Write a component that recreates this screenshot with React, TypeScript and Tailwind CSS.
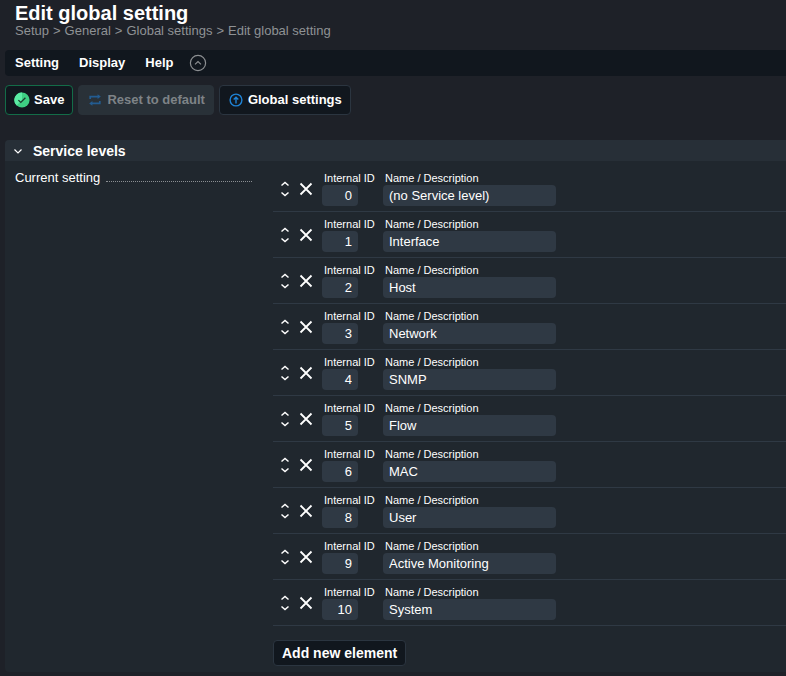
import React, { useState } from 'react';

interface ServiceLevel {
  id: number;
  name: string;
}

const initialLevels: ServiceLevel[] = [
  { id: 0, name: '(no Service level)' },
  { id: 1, name: 'Interface' },
  { id: 2, name: 'Host' },
  { id: 3, name: 'Network' },
  { id: 4, name: 'SNMP' },
  { id: 5, name: 'Flow' },
  { id: 6, name: 'MAC' },
  { id: 8, name: 'User' },
  { id: 9, name: 'Active Monitoring' },
  { id: 10, name: 'System' },
];

const breadcrumb = ['Setup', 'General', 'Global settings'];

const SaveIcon = () => (
  <svg width="16" height="16" viewBox="0 0 16 16" aria-hidden="true">
    <circle cx="8" cy="8" r="7.6" fill="#3ecf83" />
    <path d="M8 .4a7.6 7.6 0 0 0-5.4 13L8 8z" fill="#5aeba3" />
    <path d="M4.4 8.1l2.4 2.3 4.6-4.6" fill="none" stroke="#1c3a2e" strokeWidth="1.3" />
  </svg>
);

const ResetIcon = () => (
  <svg width="16" height="16" viewBox="0 0 16 16" fill="none" stroke="#235c91" strokeWidth="1.7" aria-hidden="true">
    <path d="M3.2 7V4.6h8M12.8 9v2.4h-8" />
    <path d="M10.6 2.2l3.2 2.4-3.2 2.4zM5.4 9l-3.2 2.4 3.2 2.4z" fill="#235c91" stroke="none" />
  </svg>
);

const GlobalIcon = () => (
  <svg width="16" height="16" viewBox="0 0 16 16" fill="none" stroke="#1f83d6" strokeWidth="1.4" aria-hidden="true">
    <circle cx="8" cy="8" r="5.9" />
    <path d="M8 11.4V5.4M5.7 7.5L8 5.2l2.3 2.3" />
  </svg>
);

const DragIcon = () => (
  <svg width="10" height="16" viewBox="0 0 10 16" fill="none" stroke="#fff" strokeWidth="1.5" aria-hidden="true">
    <path d="M1.5 4.5L5 1.5l3.5 3M1.5 11.5l3.5 3 3.5-3" />
  </svg>
);

const CloseIcon = () => (
  <svg width="14" height="14" viewBox="0 0 14 14" fill="none" stroke="#fff" strokeWidth="1.8" aria-hidden="true">
    <path d="M1.5 1.5l11 11M12.5 1.5l-11 11" />
  </svg>
);

const App: React.FC = () => {
  const [levels, setLevels] = useState<ServiceLevel[]>(initialLevels);
  const [open, setOpen] = useState(true);

  const updateLevel = (index: number, patch: Partial<ServiceLevel>) => {
    setLevels(levels.map((level, i) => (i === index ? { ...level, ...patch } : level)));
  };

  const addLevel = () => setLevels([...levels, { id: levels.length + 1, name: '' }]);

  return (
    <div className="min-h-screen bg-[#1e2128] pl-[5px] pb-1 text-[13px] leading-4 text-white font-['Liberation_Sans',Arial,sans-serif]">
      <header className="h-[50px] pl-[10px] pt-[2px]">
        <h1 className="text-[20px] leading-[22px] font-bold">Edit global setting</h1>
        <nav aria-label="Breadcrumb" className="flex gap-1 leading-[14px] text-[#8f9295]">
          {breadcrumb.map(item => (
            <React.Fragment key={item}>
              <a href="#">{item}</a>
              <span>&gt;</span>
            </React.Fragment>
          ))}
          <a href="#">Edit global setting</a>
        </nav>
      </header>

      {/* Menu bar */}
      <nav aria-label="Page menu" className="flex h-[26px] items-center gap-5 rounded-l bg-[#11171e] pl-[10px] font-bold">
        <button>Setting</button>
        <button>Display</button>
        <button>Help</button>
        <button aria-label="Hide suggestions" className="-ml-1">
          <svg width="18" height="18" viewBox="0 0 18 18" fill="none" stroke="#8c8f92" strokeWidth="1.2">
            <circle cx="9" cy="9" r="7.6" />
            <path d="M6 10.4l3-2.9 3 2.9" />
          </svg>
        </button>
      </nav>

      {/* Suggested actions */}
      <div className="flex gap-[5px] pt-[9px] pb-[25px] font-bold">
        <button className="flex h-[30px] items-center gap-1 rounded border border-[#136c48] bg-[#11171e] px-2">
          <SaveIcon />
          Save
        </button>
        <button
          disabled
          className="flex h-[30px] items-center gap-1 rounded border border-[#293138] bg-[#293138] px-2 text-[#7e8387]"
        >
          <ResetIcon />
          Reset to default
        </button>
        <button className="flex h-[30px] items-center gap-1 rounded border border-[#2b3540] bg-[#11171e] px-2">
          <GlobalIcon />
          Global settings
        </button>
      </div>

      {/* Service levels */}
      <section className="rounded-l bg-[#20272e]">
        <h2>
          <button
            aria-expanded={open}
            onClick={() => setOpen(!open)}
            className="flex h-[21px] w-full items-center gap-[10px] rounded-tl bg-[#272f37] pl-2 text-[14px] font-bold"
          >
            <svg width="10" height="10" viewBox="0 0 10 10" fill="none" stroke="#fff" strokeWidth="1.2" aria-hidden="true">
              <path d="M1.5 3.5L5 7l3.5-3.5" />
            </svg>
            Service levels
          </button>
        </h2>

        {open && (
          <div className="flex pb-[6px]">
            <div className="flex h-[25px] w-[268px] shrink-0 items-end gap-[6px] pl-[10px] pr-[21px]">
              <span>Current setting</span>
              <span className="mb-1 flex-1 border-b border-dotted border-[#8b8f93]" />
            </div>
            <div className="min-w-0 flex-1 pt-[5px]">
              {levels.map((level, index) => (
                <div key={index} className="flex h-[46px] items-center border-b border-[#2f3944] pl-[7px]">
                  <button aria-label="Move this entry">
                    <DragIcon />
                  </button>
                  <button aria-label="Delete this entry" className="ml-[9px] mr-[9px]">
                    <CloseIcon />
                  </button>
                  <div className="grid grid-cols-[61px_173px]">
                    <label htmlFor={`id-${index}`} className="pl-[2px] text-[11px] leading-[13px] whitespace-nowrap">
                      Internal ID
                    </label>
                    <label htmlFor={`name-${index}`} className="pl-[2px] text-[11px] leading-[13px] whitespace-nowrap">
                      Name / Description
                    </label>
                    <input
                      id={`id-${index}`}
                      type="text"
                      value={level.id}
                      onChange={e => updateLevel(index, { id: Number(e.target.value) || 0 })}
                      className="h-[21px] w-9 rounded bg-[#2f3944] px-[6px] text-right"
                    />
                    <input
                      id={`name-${index}`}
                      type="text"
                      value={level.name}
                      onChange={e => updateLevel(index, { name: e.target.value })}
                      className="h-[21px] w-full rounded bg-[#2f3944] px-[6px]"
                    />
                  </div>
                </div>
              ))}
              <button
                onClick={addLevel}
                className="mt-[14px] h-[26px] rounded border border-[#2b3540] bg-[#11171e] px-2 text-[14px] font-bold"
              >
                Add new element
              </button>
            </div>
          </div>
        )}
      </section>
    </div>
  );
};

export default App;
